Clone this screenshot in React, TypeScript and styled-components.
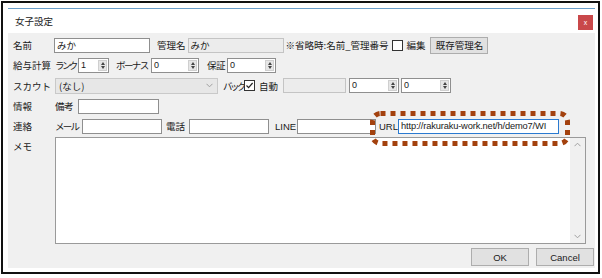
import React from 'react';
import styled, { createGlobalStyle } from 'styled-components';

const Global = createGlobalStyle`
  html, body { margin: 0; padding: 0; background: #fff; }
  body { font-family: "Noto Sans CJK JP", "Noto Sans", sans-serif; font-size: 9.5px; color: #1a1a1a; }
  * { box-sizing: border-box; }
`;

const Frame = styled.div`
  position: relative;
  margin: 1px 0 0 1px;
  width: 599px;
  height: 273px;
  border: 2px solid #111;
  padding: 5px 3px 4px 5px;
`;

const Dialog = styled.div`
  width: 587px;
  height: 260px;
  border-top: 1px solid #6a9fcb;
  display: flex;
  flex-direction: column;
`;

const TitleBar = styled.div`
  height: 24px;
  background: #fff;
  display: flex;
  align-items: center;
  justify-content: space-between;
  padding: 0 2px 0 7px;
`;

const Title = styled.span`
  font-size: 9.5px;
  color: #222;
`;

const CloseBtn = styled.div`
  width: 15px;
  height: 15px;
  margin-top: 2px;
  background: #c9484a;
  color: #fff;
  font-family: "Liberation Sans", sans-serif;
  font-size: 7px;
  line-height: 1;
  display: flex;
  align-items: center;
  justify-content: center;
`;

const Body = styled.div`
  flex: 1;
  background: #f0f0f0;
  padding: 2px 0 0 5px;
  display: flex;
  flex-direction: column;
`;

const Row = styled.div<{ $h?: number }>`
  display: flex;
  align-items: center;
  height: ${(p) => p.$h ?? 20}px;
`;

const Label = styled.span<{ $w?: number; $ml?: number; $ls?: number }>`
  display: inline-block;
  flex: none;
  width: ${(p) => (p.$w ? `${p.$w}px` : 'auto')};
  margin-left: ${(p) => p.$ml ?? 0}px;
  margin-right: ${(p) => (p.$w ? 0 : 2)}px;
  letter-spacing: ${(p) => p.$ls ?? 0}px;
  white-space: nowrap;
`;

const Latin = styled(Label)`
  font-family: "Liberation Sans", sans-serif;
  font-size: 9.5px;
`;

const TextBox = styled.div<{ $w: number; $ml?: number; $disabled?: boolean; $focus?: boolean }>`
  flex: none;
  width: ${(p) => p.$w}px;
  height: 15px;
  margin-left: ${(p) => p.$ml ?? 0}px;
  border: 1px solid ${(p) => (p.$focus ? '#2a7ad0' : p.$disabled ? '#c4c4c4' : '#8f8f8f')};
  background: ${(p) => (p.$disabled ? '#ececec' : '#fff')};
  padding: 0 2px;
  display: flex;
  align-items: center;
  white-space: nowrap;
  overflow: hidden;
  line-height: 13px;
`;

const Url = styled.span`
  font-family: "Liberation Sans", sans-serif;
  font-size: 9.3px;
  letter-spacing: -0.15px;
`;

const Num = styled.span`
  font-family: "Liberation Sans", sans-serif;
  font-size: 9px;
  flex: 1;
`;

const Spinner = styled.div`
  flex: none;
  width: 9px;
  height: 11px;
  margin-right: -1px;
  background: #e6e6e6;
  border: 1px solid #cfcfcf;
  display: flex;
  flex-direction: column;
  align-items: center;
  justify-content: center;
  gap: 1px;
`;

const Tri = styled.div<{ $down?: boolean }>`
  width: 0;
  height: 0;
  border-left: 2.5px solid transparent;
  border-right: 2.5px solid transparent;
  ${(p) => (p.$down ? 'border-top: 3px solid #444;' : 'border-bottom: 3px solid #444;')}
`;

const Select = styled.div<{ $w: number }>`
  flex: none;
  width: ${(p) => p.$w}px;
  height: 16px;
  border: 1px solid #c9c9c9;
  background: #e7e7e7;
  display: flex;
  align-items: center;
  justify-content: space-between;
  padding: 0 4px 0 3px;
`;

const Check = styled.div<{ $ml?: number; $mr?: number }>`
  flex: none;
  width: 11px;
  height: 11px;
  margin-left: ${(p) => p.$ml ?? 0}px;
  margin-right: ${(p) => p.$mr ?? 3}px;
  border: 1px solid #333;
  background: #fff;
  display: flex;
  align-items: center;
  justify-content: center;
`;

const Button = styled.div<{ $w: number; $h?: number; $ml?: number }>`
  flex: none;
  width: ${(p) => p.$w}px;
  height: ${(p) => p.$h ?? 17}px;
  margin-left: ${(p) => p.$ml ?? 0}px;
  border: 1px solid #adadad;
  background: #e1e1e1;
  display: flex;
  align-items: center;
  justify-content: center;
`;

const BtnLatin = styled.span`
  font-family: "Liberation Sans", sans-serif;
  font-size: 9.5px;
`;

const MemoRow = styled.div`
  display: flex;
  align-items: flex-start;
  margin-top: 1px;
`;

const MemoLabel = styled.span`
  width: 42px;
  flex: none;
  padding-top: 2px;
`;

const MemoArea = styled.div`
  width: 531px;
  height: 107px;
  border: 1px solid #9a9a9a;
  background: #fff;
  display: flex;
  justify-content: flex-end;
`;

const ScrollBar = styled.div`
  width: 15px;
  height: 100%;
  background: #f0f0f0;
  display: flex;
  flex-direction: column;
  justify-content: space-between;
  align-items: center;
  padding: 4px 0;
`;

const Footer = styled.div`
  display: flex;
  justify-content: flex-end;
  gap: 7px;
  margin-top: 4px;
  padding-right: 1px;
`;

const UrlMark = styled.svg`
  position: absolute;
  left: 365px;
  top: 105px;
  pointer-events: none;
`;

const Chevron = ({ up }: { up?: boolean }) => (
  <svg width="7" height="5" viewBox="0 0 7 5">
    <path d={up ? 'M0.5 4.2 L3.5 1.2 L6.5 4.2' : 'M0.5 0.8 L3.5 3.8 L6.5 0.8'} fill="none" stroke="#a0a0a0" strokeWidth="1" />
  </svg>
);

const Spin = ({ w, v, ml }: { w: number; v: string; ml?: number }) => (
  <TextBox $w={w} $ml={ml}>
    <Num>{v}</Num>
    <Spinner>
      <Tri />
      <Tri $down />
    </Spinner>
  </TextBox>
);

export default function App() {
  return (
    <>
      <Global />
      <Frame>
        <Dialog>
          <TitleBar>
            <Title>女子設定</Title>
            <CloseBtn>x</CloseBtn>
          </TitleBar>
          <Body>
            <Row $h={20}>
              <Label $w={41}>名前</Label>
              <TextBox $w={96}>みか</TextBox>
              <Label $ml={7}>管理名</Label>
              <TextBox $w={96} $disabled>みか</TextBox>
              <Label $ml={2}>※省略時:名前_管理番号</Label>
              <Check $ml={2} />
              <Label>編集</Label>
              <Button $w={58} $ml={3}>既存管理名</Button>
            </Row>
            <Row $h={20}>
              <Label $w={42}>給与計算</Label>
              <Label $w={23} $ls={-2.6}>ランク</Label>
              <Spin w={31} v="1" />
              <Label $w={35} $ml={7} $ls={-1.6}>ボーナス</Label>
              <Spin w={48} v="0" />
              <Label $w={20} $ml={8} $ls={-0.5}>保証</Label>
              <Spin w={49} v="0" />
            </Row>
            <Row $h={21}>
              <Label $w={42}>スカウト</Label>
              <Select $w={163}>
                <span>(なし)</span>
                <Chevron />
              </Select>
              <Label $w={21} $ml={5} $ls={-2.6}>バック</Label>
              <Check $mr={4}>
                <svg width="9" height="9" viewBox="0 0 9 9">
                  <path d="M1.5 4.5 L3.6 6.6 L7.6 2" fill="none" stroke="#222" strokeWidth="1.2" />
                </svg>
              </Check>
              <Label $w={22}>自動</Label>
              <TextBox $w={63} $ml={2} $disabled />
              <Spin w={50} v="0" ml={3} />
              <Spin w={50} v="0" ml={2} />
            </Row>
            <Row $h={20}>
              <Label $w={42}>情報</Label>
              <Label $w={23} $ls={-0.5}>備考</Label>
              <TextBox $w={81} />
            </Row>
            <Row $h={20}>
              <Label $w={42}>連絡</Label>
              <Label $w={27} $ls={-1.8}>メール</Label>
              <TextBox $w={80} />
              <Label $w={23} $ml={4}>電話</Label>
              <TextBox $w={80} />
              <Latin $w={22} $ml={6}>LINE</Latin>
              <TextBox $w={79} />
              <Latin $w={19} $ml={3}>URL</Latin>
              <TextBox $w={161} $focus>
                <Url>http://rakuraku-work.net/h/demo7/WI</Url>
              </TextBox>
            </Row>
            <MemoRow>
              <MemoLabel>メモ</MemoLabel>
              <MemoArea>
                <ScrollBar>
                  <Chevron up />
                  <Chevron />
                </ScrollBar>
              </MemoArea>
            </MemoRow>
            <Footer>
              <Button $w={58} $h={18}><BtnLatin>OK</BtnLatin></Button>
              <Button $w={58} $h={18}><BtnLatin>Cancel</BtnLatin></Button>
            </Footer>
          </Body>
        </Dialog>
        <UrlMark width="205" height="40" viewBox="0 0 205 40">
          <rect x="4.5" y="5.5" width="195" height="30" rx="8" fill="none" stroke="#a3410e" strokeWidth="5" strokeDasharray="5 5" />
        </UrlMark>
      </Frame>
    </>
  );
}
